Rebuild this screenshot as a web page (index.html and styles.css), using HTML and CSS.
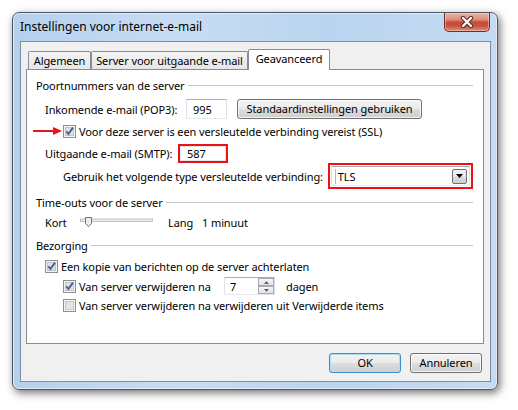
FILE: index.html
```html
<!DOCTYPE html>
<html>
<head>
<meta charset="utf-8">
<link rel="stylesheet" href="styles.css">
</head>
<body>
<div class="window">
  <div class="titlebar">
    <span class="title">Instellingen voor internet-e-mail</span>
    <div class="close">
      <svg width="14" height="12" viewBox="0 0 14 12"><path d="M3 2 L11 10 M11 2 L3 10" stroke="#5b2a20" stroke-width="4.4" stroke-linecap="round"/><path d="M3 2 L11 10 M11 2 L3 10" stroke="#fff" stroke-width="2.4" stroke-linecap="round"/></svg>
    </div>
  </div>
  <div class="client">
    <div class="tabs">
      <div class="tab t1">Algemeen</div>
      <div class="tab t2">Server voor uitgaande e-mail</div>
      <div class="tab active">Geavanceerd</div>
    </div>
    <div class="panel">
      <div class="group"><span>Poortnummers van de server</span><span class="line"></span></div>
      <div class="row r-pop ind1">
        <span class="lbl-pop">Inkomende e-mail (POP3):</span>
        <div class="textbox tb-pop">995</div>
        <div class="btn btn-std">Standaardinstellingen gebruiken</div>
      </div>
      <div class="row r-ssl ind2">
        <svg class="arrow" width="29" height="10" viewBox="0 0 29 10"><path d="M0 5 H22" stroke="#e8141a" stroke-width="2"/><path d="M20 1 L29 5 L20 9 Z" fill="#e8141a"/></svg>
        <svg class="cb" width="13" height="13" viewBox="0 0 13 13"><rect x="0.5" y="0.5" width="12" height="12" fill="#f4f4f4" stroke="#8f8f8f"/><rect x="2.5" y="2.5" width="8" height="8" fill="#dfe2e7" stroke="#bfc3c9"/><path d="M3.3 6.2 L5.4 9 L10 2.6" fill="none" stroke="#4a5e96" stroke-width="1.9"/></svg>
        <span class="cb-text">Voor deze server is een versleutelde verbinding vereist (SSL)</span>
      </div>
      <div class="row r-smtp ind1">
        <span class="lbl-smtp">Uitgaande e-mail (SMTP):</span>
        <div class="redbox rb-smtp"><div class="textbox tb-smtp">587</div></div>
      </div>
      <div class="row r-enc ind2">
        <span class="lbl-enc">Gebruik het volgende type versleutelde verbinding:</span>
        <div class="redbox rb-enc">
          <div class="combo">
            <span class="combo-val"><span class="caret"></span>TLS</span>
            <span class="combo-btn"><svg width="7" height="4" viewBox="0 0 7 4"><path d="M0 0 H7 L3.5 4 Z" fill="#000"/></svg></span>
          </div>
        </div>
      </div>
      <div class="group r-h2"><span>Time-outs voor de server</span><span class="line"></span></div>
      <div class="row r-slider ind1">
        <span class="lbl-kort">Kort</span>
        <svg class="slider" width="73" height="16" viewBox="0 0 73 16"><rect x="0.5" y="5" width="72" height="2.5" fill="#e9ecec" stroke="#b4b7ba" stroke-width="0.8"/><path d="M5.5 3.5 H11.5 V9.5 L8.5 12.5 L5.5 9.5 Z" fill="#eeeeee" stroke="#6f7377"/></svg>
        <span class="lbl-lang">Lang</span>
        <span>1 minuut</span>
      </div>
      <div class="group r-h3"><span>Bezorging</span><span class="line"></span></div>
      <div class="row r-cb1 ind1">
        <svg class="cb" width="13" height="13" viewBox="0 0 13 13"><rect x="0.5" y="0.5" width="12" height="12" fill="#f4f4f4" stroke="#8f8f8f"/><rect x="2.5" y="2.5" width="8" height="8" fill="#dfe2e7" stroke="#bfc3c9"/><path d="M3.3 6.2 L5.4 9 L10 2.6" fill="none" stroke="#4a5e96" stroke-width="1.9"/></svg>
        <span class="cb-text">Een kopie van berichten op de server achterlaten</span>
      </div>
      <div class="row r-cb2 ind2">
        <svg class="cb" width="13" height="13" viewBox="0 0 13 13"><rect x="0.5" y="0.5" width="12" height="12" fill="#f4f4f4" stroke="#8f8f8f"/><rect x="2.5" y="2.5" width="8" height="8" fill="#dfe2e7" stroke="#bfc3c9"/><path d="M3.3 6.2 L5.4 9 L10 2.6" fill="none" stroke="#4a5e96" stroke-width="1.9"/></svg>
        <span class="cb-text lbl-na">Van server verwijderen na</span>
        <div class="textbox spin">
          <span class="spin-val">7</span>
          <span class="spin-btns">
            <span class="spin-btn"><svg width="5" height="3" viewBox="0 0 5 3"><path d="M0 3 H5 L2.5 0 Z" fill="#4f6387"/></svg></span>
            <span class="spin-btn"><svg width="5" height="3" viewBox="0 0 5 3"><path d="M0 0 H5 L2.5 3 Z" fill="#4f6387"/></svg></span>
          </span>
        </div>
        <span class="lbl-dagen">dagen</span>
      </div>
      <div class="row r-cb3 ind2">
        <svg class="cb" width="13" height="13" viewBox="0 0 13 13"><rect x="0.5" y="0.5" width="12" height="12" fill="#f4f4f4" stroke="#8f8f8f"/><rect x="2.5" y="2.5" width="8" height="8" fill="#e2e4e8" stroke="#c3c6cb"/></svg>
        <span class="cb-text">Van server verwijderen na verwijderen uit Verwijderde items</span>
      </div>
    </div>
    <div class="buttons">
      <div class="btn btn-dlg default">OK</div>
      <div class="btn btn-dlg">Annuleren</div>
    </div>
  </div>
</div>
</body>
</html>
```
FILE: styles.css
```css
* { box-sizing: border-box; }
html, body { margin: 0; padding: 0; }
body {
  width: 518px;
  height: 410px;
  background: #fff;
  font-family: "Noto Sans", "Open Sans", sans-serif;
  font-size: 11px;
  letter-spacing: -0.1px;
  color: #000;
  overflow: hidden;
  white-space: nowrap;
}
.window {
  margin: 12px 0 0 12px;
  width: 486px;
  height: 378px;
  border: 1px solid #4b5666;
  border-radius: 7px;
  background: linear-gradient(to right, #b5d0ee 0%, #c7ddf3 35%, #bad4ef 65%, #c5dbf2 100%);
  box-shadow: 2px 3px 9px rgba(0,0,0,0.55), inset 0 0 0 1px rgba(255,255,255,0.55);
  display: flex;
  flex-direction: column;
}
.titlebar {
  height: 28px;
  display: flex;
  justify-content: space-between;
  align-items: flex-start;
  padding: 0 7px 0 7px;
}
.title {
  align-self: center;
  margin-top: -2px;
  font-size: 12px;
  letter-spacing: 0;
}
.close {
  width: 46px;
  height: 19px;
  border: 1px solid #6e2f25;
  border-top: none;
  border-radius: 0 0 5px 5px;
  background: linear-gradient(#eab2a4 0%, #dc9381 35%, #c44a37 52%, #c85440 72%, #dd8f79 100%);
  box-shadow: inset 0 0 0 1px rgba(255,225,215,0.45);
  display: flex;
  align-items: center;
  justify-content: center;
}
.client {
  margin: 0 6px 0 7px;
  height: 341px;
  border: 1px solid #7d8ea3;
  background: #f0f0f0;
  padding: 7px 6px 0 5px;
  display: flex;
  flex-direction: column;
}
.tabs {
  display: flex;
  align-items: flex-end;
  height: 20px;
  padding-left: 2px;
}
.tab {
  height: 18px;
  border: 1px solid #898c95;
  border-bottom: none;
  border-radius: 2px 2px 0 0;
  background: linear-gradient(#f4f4f4, #e6e6e6);
  display: flex;
  align-items: center;
  justify-content: center;
  padding-bottom: 1px;
}
.t1 { width: 63px; }
.t2 { width: 157px; }
.tab.active {
  width: 82px;
  height: 21px;
  margin-bottom: -1px;
  background: #fff;
  position: relative;
  z-index: 1;
  padding-bottom: 3px;
}
.panel {
  height: 275px;
  border: 1px solid #898c95;
  background: #fff;
  padding: 7px 10px 0 9px;
}
.group {
  display: flex;
  align-items: center;
  height: 16px;
}
.group .line {
  flex: 1;
  height: 1px;
  background: #c4c6c8;
  margin-left: 3px;
  margin-top: 1px;
}
.row {
  display: flex;
  align-items: center;
  position: relative;
}
.ind1 { margin-left: 9px; }
.ind2 { margin-left: 27px; }

.r-pop { margin-top: 6px; height: 20px; }
.lbl-pop { width: 141px; }
.textbox {
  height: 20px;
  border: 1px solid #abadb3;
  border-color: #abadb3 #dbdfe6 #e3e9ef #e2e3ea;
  background: #fff;
  padding-left: 6px;
  display: flex;
  align-items: center;
}
.tb-pop { width: 41px; }
.btn {
  height: 20px;
  border: 1px solid #707070;
  border-radius: 3px;
  background: linear-gradient(#f2f2f2 0%, #ebebeb 48%, #dddddd 52%, #cfcfcf 100%);
  box-shadow: inset 0 0 0 1px rgba(255,255,255,0.75);
  display: flex;
  align-items: center;
  justify-content: center;
  padding-bottom: 1px;
}
.btn-std { width: 185px; margin-left: 10px; }

.r-ssl { margin-top: 4px; height: 16px; }
.arrow { position: absolute; left: -30px; top: 3px; }
.cb { flex: none; }
.cb-text { margin-left: 3px; }

.r-smtp { margin-top: 5px; height: 19px; }
.lbl-smtp { width: 133px; }
.redbox { border: 2px solid #ee1111; }
.rb-smtp { width: 50px; height: 19px; }
.tb-smtp { width: 100%; height: 100%; border-color: #e3e6ea; }

.r-enc { height: 26px; }
.lbl-enc { width: 268px; }
.rb-enc { width: 147px; height: 26px; padding: 1px; }
.combo {
  width: 100%;
  height: 100%;
  border: 1px solid #abadb3;
  border-color: #abadb3 #dbdfe6 #e3e9ef #e2e3ea;
  background: #fff;
  display: flex;
  align-items: center;
  justify-content: space-between;
  padding: 0 2px 0 3px;
}
.combo-val { display: flex; align-items: center; }
.caret { width: 1px; height: 15px; background: #8fc1ea; margin-right: 2px; }
.combo-btn {
  width: 15px;
  height: 15px;
  border: 1px solid #707070;
  border-radius: 2px;
  background: linear-gradient(#f2f2f2 0%, #ebebeb 48%, #dddddd 52%, #cfcfcf 100%);
  display: flex;
  align-items: center;
  justify-content: center;
}

.r-h2 { margin-top: 5px; }
.r-slider { margin-top: 4px; height: 16px; }
.lbl-kort { width: 35px; }
.slider { flex: none; }
.lbl-lang { margin-left: 15px; width: 34px; }

.r-h3 { margin-top: 7px; }
.r-cb1 { margin-top: 5px; height: 16px; }
.r-cb2 { margin-top: 3px; height: 18px; }
.lbl-na { width: 145px; }
.spin {
  width: 51px;
  height: 18px;
  padding: 0 0 0 5px;
  justify-content: space-between;
}
.spin-btns {
  display: flex;
  flex-direction: column;
  width: 16px;
  height: 16px;
}
.spin-btn {
  height: 8px;
  border: 1px solid #a7abb0;
  background: linear-gradient(#f6f6f6, #e2e4e6);
  display: flex;
  align-items: center;
  justify-content: center;
}
.lbl-dagen { margin-left: 11px; }
.r-cb3 { margin-top: 2px; height: 16px; }

.buttons {
  margin-top: 9px;
  display: flex;
  justify-content: flex-end;
  gap: 9px;
  padding-right: 2px;
}
.btn-dlg { width: 72px; }
.btn.default {
  border-color: #3c8fcf;
  box-shadow: inset 0 0 0 1px #a9def6;
}
```
